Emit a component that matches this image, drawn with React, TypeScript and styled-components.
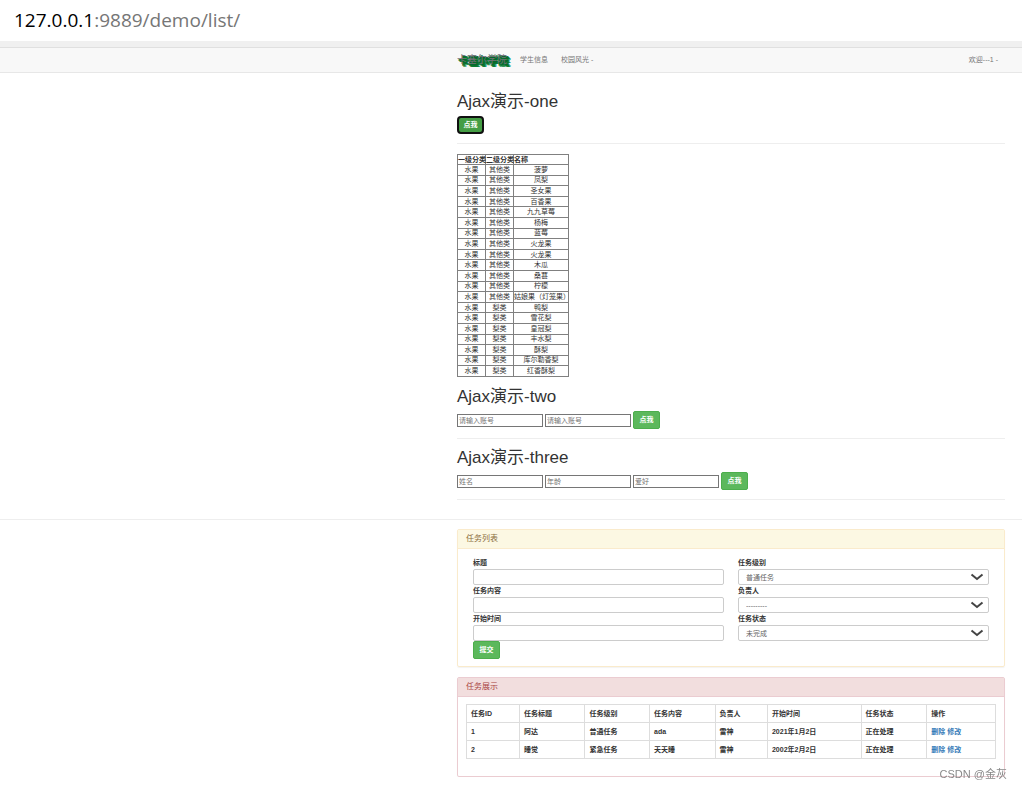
import React from "react";
import styled, { createGlobalStyle } from "styled-components";

const GlobalStyle = createGlobalStyle`
  *, *::before, *::after { box-sizing: border-box; }
  body {
    margin: 0;
    background: #fff;
    color: #333;
    font: 7px/10px "Liberation Sans", "Noto Sans CJK SC", sans-serif;
  }
  input, select, button { font-family: inherit; font-size: 7px; margin: 0; }
`;

const AddressBar = styled.header`
  padding: 0 14px 1px;
  font: 19px/40px "Open Sans", sans-serif;
  color: #767676;
  border-bottom: 6px solid #f0f0f0;
`;
const Host = styled.span`
  color: #000;
`;
const Navbar = styled.nav`
  border-top: 1px solid #e0e0e0;
  border-bottom: 1px solid #e7e7e7;
  background: #f8f8f8;
  height: 26px;
  padding: 0 24px 0 457px;
  display: flex;
  align-items: center;
  gap: 13px;
`;
const Brand = styled.a`
  font-size: 10px;
  line-height: 14px;
  color: #75717b;
  text-decoration: none;
  width: 50px;
  white-space: nowrap;
  text-shadow: 1px 1px 0 #05682c, 2px 1px 0 #05682c, 1px 2px 0 #07702c,
    2px 2px 0 #07782e, 3px 2px 0 #07782e, 2px 3px 0 #087a2e, 3px 3px 0 #087a2e,
    4px 3px 0 #0a9a6a;
`;
const NavLink = styled.a<{ $end?: boolean }>`
  color: #777;
  text-decoration: none;
  margin-left: ${(p) => (p.$end ? "auto" : "0")};
`;
const Container = styled.section`
  padding: 0 17px 0 457px;
`;
const Demos = styled(Container)`
  padding-top: 19px;
  border-bottom: 1px solid #eee;
  padding-bottom: 10px;
`;
const Heading = styled.h2`
  font-size: 17px;
  line-height: 20px;
  font-weight: 400;
  margin: 0 0 4px;
`;
const Rule = styled.hr`
  border: 0;
  border-top: 1px solid #eee;
  margin: 9px 0;
`;
const Row = styled.form`
  display: flex;
  align-items: center;
  gap: 2px;
`;
const Button = styled.button<{ $focused?: boolean }>`
  width: 27px;
  height: 18px;
  padding: 0;
  line-height: 10px;
  font-weight: 700;
  color: #fff;
  border-radius: 2px;
  border: 1px solid #4cae4c;
  background: #5cb85c;
  ${(p) =>
    p.$focused &&
    "border: 2px solid #101010; background: #449d44; border-radius: 4px;"}
`;
const PlainInput = styled.input`
  width: 86px;
  height: 13px;
  padding: 0 1px;
  border: 1px solid #767676;
  color: #333;
  &::placeholder { color: #757575; }
`;
const FruitTable = styled.table`
  border-collapse: collapse;
  width: 112px;
  height: 223px;
  table-layout: fixed;
  margin: 10px 0;
  text-align: center;
  line-height: 8px;
  th, td { border: 1px solid #808080; padding: 0; white-space: nowrap; }
  th { text-align: left; line-height: 9px; }
`;
const Col = styled.col<{ $w: string }>`
  width: ${(p) => p.$w};
`;
const Panels = styled(Container)`
  padding-top: 9px;
  display: grid;
  gap: 10px;
`;
const Panel = styled.section<{ $edge: string }>`
  border: 1px solid ${(p) => p.$edge};
  border-radius: 2px;
  box-shadow: 0 1px 1px rgba(0, 0, 0, 0.05);
`;
const PanelTitle = styled.h3<{ $bg: string; $ink: string; $edge: string }>`
  margin: 0;
  padding: 0 8px;
  font-size: 8px;
  line-height: 18px;
  font-weight: 400;
  color: ${(p) => p.$ink};
  background: ${(p) => p.$bg};
  border-bottom: 1px solid ${(p) => p.$edge};
`;
const TaskForm = styled.form`
  padding: 8px 15px 7px;
`;
const Fields = styled.div`
  display: grid;
  grid-template-columns: 1fr 1fr;
  column-gap: 14px;
`;
const Field = styled.label`
  display: grid;
  grid-template-rows: 12px 16px;
  font-weight: 700;
  line-height: 12px;
`;
const SelectBox = styled.span`
  display: grid;
  align-items: center;
  > * { grid-area: 1 / 1; }
  svg { justify-self: end; margin-right: 5px; pointer-events: none; }
`;
const TextInput = styled.input`
  width: 100%;
  height: 16px;
  border: 1px solid #ccc;
  border-radius: 2px;
  padding: 0 7px;
`;
const Select = styled.select`
  appearance: none;
  width: 100%;
  height: 16px;
  border: 1px solid #ccc;
  border-radius: 2px;
  padding: 0 7px;
  color: #666;
  background: #fff;
`;
const TableWrap = styled.div`
  padding: 7px 8px 17px;
`;
const TaskTable = styled.table`
  width: 100%;
  table-layout: fixed;
  border-collapse: collapse;
  font-weight: 700;
  text-align: left;
  th, td { border: 1px solid #ddd; padding: 0 4px; height: 18px; }
`;
const Action = styled.a`
  color: #337ab7;
  text-decoration: none;
  margin-right: 2px;
`;
const Watermark = styled.div`
  position: fixed;
  right: 15px;
  bottom: 7px;
  font-size: 11px;
  line-height: 16px;
  color: #888;
`;

const fruits: [string, string][] = [
  ...["菠萝", "凤梨", "圣女果", "百香果", "九九草莓", "杨梅", "蓝莓", "火龙果", "火龙果", "木瓜", "桑葚", "柠檬", "姑娘果（灯笼果）"].map(
    (n): [string, string] => ["其他类", n]
  ),
  ...["鸭梨", "雪花梨", "皇冠梨", "丰水梨", "酥梨", "库尔勒香梨", "红香酥梨"].map(
    (n): [string, string] => ["梨类", n]
  ),
];

const fields: [string, string, string][] = [
  ["标题", "任务级别", "普通任务"],
  ["任务内容", "负责人", "---------"],
  ["开始时间", "任务状态", "未完成"],
];

const columns: [string, string][] = [
  ["任务ID", "10%"],
  ["任务标题", "12.4%"],
  ["任务级别", "12.2%"],
  ["任务内容", "12.4%"],
  ["负责人", "9.9%"],
  ["开始时间", "17.7%"],
  ["任务状态", "12.4%"],
  ["操作", "13%"],
];

const tasks = [
  ["1", "阿达", "普通任务", "ada", "雷神", "2021年1月2日", "正在处理"],
  ["2", "睡觉", "紧急任务", "天天睡", "雷神", "2002年2月2日", "正在处理"],
];

const Chevron = () => (
  <svg width="14" height="8" viewBox="0 0 14 8" fill="none" aria-hidden="true">
    <path d="M1.5 1.5 L7 6 L12.5 1.5" stroke="#444" strokeWidth="2" />
  </svg>
);

export default function App() {
  return (
    <>
      <GlobalStyle />
      <AddressBar>
        <Host>127.0.0.1</Host>:9889/demo/list/
      </AddressBar>
      <Navbar>
        <Brand href="#">卡塞尔学院</Brand>
        <NavLink href="#">学生信息</NavLink>
        <NavLink href="#">校园风光 -</NavLink>
        <NavLink href="#" $end>欢迎---1 -</NavLink>
      </Navbar>
      <main>
        <Demos>
          <Heading>Ajax演示-one</Heading>
          <Row>
            <Button type="button" $focused>点我</Button>
          </Row>
          <Rule />
          <FruitTable>
            <colgroup>
              <Col $w="28px" />
              <Col $w="28px" />
              <Col $w="55px" />
            </colgroup>
            <thead>
              <tr><th>一级分类</th><th>二级分类</th><th>名称</th></tr>
            </thead>
            <tbody>
              {fruits.map(([kind, name], i) => (
                <tr key={i}><td>水果</td><td>{kind}</td><td>{name}</td></tr>
              ))}
            </tbody>
          </FruitTable>
          <Heading>Ajax演示-two</Heading>
          <Row>
            <PlainInput placeholder="请输入账号" aria-label="账号" />
            <PlainInput placeholder="请输入账号" aria-label="账号" />
            <Button type="button">点我</Button>
          </Row>
          <Rule />
          <Heading>Ajax演示-three</Heading>
          <Row>
            <PlainInput placeholder="姓名" aria-label="姓名" />
            <PlainInput placeholder="年龄" aria-label="年龄" />
            <PlainInput placeholder="爱好" aria-label="爱好" />
            <Button type="button">点我</Button>
          </Row>
          <Rule />
        </Demos>
        <Panels>
          <Panel $edge="#faebcc">
            <PanelTitle $bg="#fcf8e3" $ink="#8a6d3b" $edge="#faebcc">任务列表</PanelTitle>
            <TaskForm>
              <Fields>
                {fields.map(([text, choice, value]) => (
                  <React.Fragment key={text}>
                    <Field>
                      {text}
                      <TextInput type="text" />
                    </Field>
                    <Field>
                      {choice}
                      <SelectBox>
                        <Select><option>{value}</option></Select>
                        <Chevron />
                      </SelectBox>
                    </Field>
                  </React.Fragment>
                ))}
              </Fields>
              <Button type="button">提交</Button>
            </TaskForm>
          </Panel>
          <Panel $edge="#ebccd1">
            <PanelTitle $bg="#f2dede" $ink="#a94442" $edge="#ebccd1">任务展示</PanelTitle>
            <TableWrap>
              <TaskTable>
                <colgroup>
                  {columns.map(([name, w]) => <Col key={name} $w={w} />)}
                </colgroup>
                <thead>
                  <tr>{columns.map(([name]) => <th key={name}>{name}</th>)}</tr>
                </thead>
                <tbody>
                  {tasks.map((task) => (
                    <tr key={task[0]}>
                      {task.map((cell, i) => <td key={i}>{cell}</td>)}
                      <td>
                        <Action href="#">删除</Action>
                        <Action href="#">修改</Action>
                      </td>
                    </tr>
                  ))}
                </tbody>
              </TaskTable>
            </TableWrap>
          </Panel>
        </Panels>
      </main>
      <Watermark>CSDN @金灰</Watermark>
    </>
  );
}
